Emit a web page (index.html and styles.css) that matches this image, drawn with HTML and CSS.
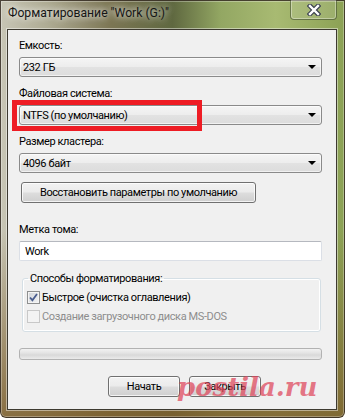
FILE: index.html
```html
<!DOCTYPE html>
<html lang="ru">
<head>
    <meta charset="UTF-8">
    <meta name="viewport" content="width=device-width, initial-scale=1.0">
    <title>Форматирование "Work (G:)"</title>
    <link rel="stylesheet" href="styles.css">
</head>
<body>
    <div class="window">
        <div class="titlebar">
            <span class="title">Форматирование "Work (G:)"</span>
            <div class="close-btn">
                <svg width="14" height="12" viewBox="0 0 14 12">
                    <path d="M3 2 L11 10 M11 2 L3 10" stroke="#3b4150" stroke-width="4.6" stroke-linecap="square"/>
                    <path d="M3 2 L11 10 M11 2 L3 10" stroke="#ffffff" stroke-width="2.4" stroke-linecap="square"/>
                </svg>
            </div>
        </div>

        <div class="client">
            <div class="form-group">
                <label>Емкость:</label>
                <div class="combo"><span>232 ГБ</span><i class="arrow"></i></div>
            </div>
            <div class="form-group highlighted">
                <label>Файловая система:</label>
                <div class="combo"><span>NTFS (по умолчанию)</span><i class="arrow"></i></div>
                <div class="red-mark"></div>
            </div>
            <div class="form-group">
                <label>Размер кластера:</label>
                <div class="combo"><span>4096 байт</span><i class="arrow"></i></div>
            </div>

            <button type="button" class="btn restore-btn">Восстановить параметры по умолчанию</button>

            <div class="form-group volume">
                <label>Метка тома:</label>
                <input type="text" class="textbox" value="Work">
            </div>

            <fieldset class="group">
                <legend>Способы форматирования:</legend>
                <div class="check-row">
                    <span class="checkbox checked">
                        <svg width="9" height="9" viewBox="0 0 9 9">
                            <path d="M1 4.5 L3.4 7.2 L8 1" fill="none" stroke="#4a5d8e" stroke-width="1.8"/>
                        </svg>
                    </span>
                    <span>Быстрое (очистка оглавления)</span>
                </div>
                <div class="check-row disabled">
                    <span class="checkbox"></span>
                    <span>Создание загрузочного диска MS-DOS</span>
                </div>
            </fieldset>

            <div class="progress"></div>

            <div class="actions">
                <button type="button" class="btn">Начать</button>
                <button type="button" class="btn">Закрыть</button>
            </div>
        </div>

        <div class="watermark">postila.ru</div>
    </div>
</body>
</html>
```

FILE: styles.css
```css
body {
    margin: 0;
    padding: 0;
    font-family: Roboto, "Noto Sans", sans-serif;
    font-size: 11px;
    letter-spacing: -0.4px;
    color: #000;
}
.window {
    position: relative;
    width: 345px;
    height: 418px;
    box-sizing: border-box;
    padding: 0 8px 8px 7px;
    border-radius: 0 0 6px 6px;
    background:
        linear-gradient(to bottom, rgba(0, 0, 0, 0) 55%, rgba(125, 95, 45, 0.85) 100%),
        linear-gradient(to right, #c8c6b6 0%, #aeab93 14%, #7c7654 32%, #5f6840 50%, #93a763 64%, #a8ba72 80%, #8ba154 100%);
    box-shadow: inset 0 0 0 1px rgba(40, 30, 20, 0.8), inset 0 0 0 2px rgba(255, 255, 255, 0.3);
    overflow: hidden;
}
.titlebar {
    height: 29px;
    display: flex;
    align-items: flex-start;
    justify-content: space-between;
}
.title {
    margin: 6px 0 0 1px;
    font-size: 12.2px;
    letter-spacing: 0;
    color: #161616;
    white-space: nowrap;
    text-shadow: 0 0 6px rgba(255, 255, 255, 0.9), 0 0 10px rgba(255, 255, 255, 0.6);
}
.close-btn {
    width: 45px;
    height: 19px;
    display: flex;
    align-items: center;
    justify-content: center;
    border: 1px solid rgba(50, 60, 30, 0.55);
    border-top: none;
    border-radius: 0 0 4px 4px;
    background: rgba(255, 255, 255, 0.12);
    box-shadow: inset 0 0 0 1px rgba(255, 255, 255, 0.35);
}
.client {
    position: relative;
    height: 381px;
    box-sizing: border-box;
    padding: 8px 14px 0 11px;
    background: #f0f0f0;
    border: 1px solid #3d3a30;
    box-shadow: 0 0 0 1px rgba(255, 255, 255, 0.45);
}
.form-group {
    position: relative;
    margin-bottom: 9px;
}
.form-group label {
    display: block;
    height: 15px;
    line-height: 15px;
    margin-bottom: 4px;
}
.combo {
    height: 20px;
    box-sizing: border-box;
    display: flex;
    align-items: center;
    justify-content: space-between;
    padding: 0 5px 0 3px;
    border: 1px solid #8a8a8a;
    border-radius: 3px;
    background: linear-gradient(#f5f5f5 0%, #ededed 48%, #e2e2e2 52%, #dcdcdc 100%);
    box-shadow: inset 0 0 0 1px rgba(255, 255, 255, 0.6);
}
.arrow {
    width: 0;
    height: 0;
    border-left: 4px solid transparent;
    border-right: 4px solid transparent;
    border-top: 4px solid #000;
}
.red-mark {
    position: absolute;
    left: -7px;
    top: 14px;
    width: 190px;
    height: 31px;
    box-sizing: border-box;
    border: 5px solid #ee1c24;
}
.btn {
    height: 21px;
    box-sizing: border-box;
    padding: 0;
    font-family: inherit;
    font-size: 11px;
    letter-spacing: -0.4px;
    color: #000;
    white-space: nowrap;
    border: 1px solid #707070;
    border-radius: 3px;
    background: linear-gradient(#f2f2f2 0%, #ebebeb 48%, #dddddd 52%, #cfcfcf 100%);
    box-shadow: inset 0 0 0 1px rgba(255, 255, 255, 0.75);
}
.restore-btn {
    display: block;
    width: 235px;
    margin: 3px 0 0 2px;
}
.volume {
    margin-top: 19px;
    margin-bottom: 10px;
}
.textbox {
    display: block;
    width: 100%;
    height: 20px;
    box-sizing: border-box;
    margin: 0;
    padding: 0 5px;
    font-family: inherit;
    font-size: 11px;
    letter-spacing: -0.4px;
    background: #fff;
    border: 1px solid #dbdfe6;
    border-top-color: #b5b8bf;
    border-radius: 2px;
}
.group {
    margin: 0 1px 0 3px;
    padding: 4px 4px 7px 4px;
    border: 1px solid #d5dfe5;
    border-radius: 3px;
    box-shadow: inset 0 0 0 1px #fff;
}
.group legend {
    padding: 0 2px;
    margin-left: 1px;
    height: 15px;
    line-height: 15px;
}
.check-row {
    display: flex;
    align-items: center;
    gap: 2px;
    height: 15px;
    margin-bottom: 4px;
}
.check-row:last-child {
    margin-bottom: 0;
}
.checkbox {
    width: 13px;
    height: 13px;
    box-sizing: border-box;
    display: flex;
    align-items: center;
    justify-content: center;
    border: 1px solid #8e8f8f;
    background: linear-gradient(135deg, #d0d4d9, #f4f4f4);
    box-shadow: inset 0 0 0 1px #f4f4f4;
}
.check-row.disabled {
    color: #8d8d8d;
}
.check-row.disabled .checkbox {
    border-color: #c8c8c8;
    background: #f3f3f3;
    box-shadow: none;
}
.progress {
    height: 12px;
    margin-top: 16px;
    box-sizing: border-box;
    border: 1px solid #b2b2b2;
    border-radius: 3px;
    background: linear-gradient(#f2f2f2 0%, #e4e4e4 40%, #d9d9d9 60%, #ebebeb 100%);
}
.actions {
    display: flex;
    gap: 9px;
    margin: 16px 0 0 89px;
}
.actions .btn {
    width: 72px;
}
.watermark {
    position: absolute;
    left: 177px;
    top: 371px;
    font-family: "DejaVu Serif", serif;
    font-weight: bold;
    font-style: italic;
    font-size: 26px;
    line-height: 32px;
    letter-spacing: 0;
    color: rgba(222, 70, 90, 0.72);
}
```
